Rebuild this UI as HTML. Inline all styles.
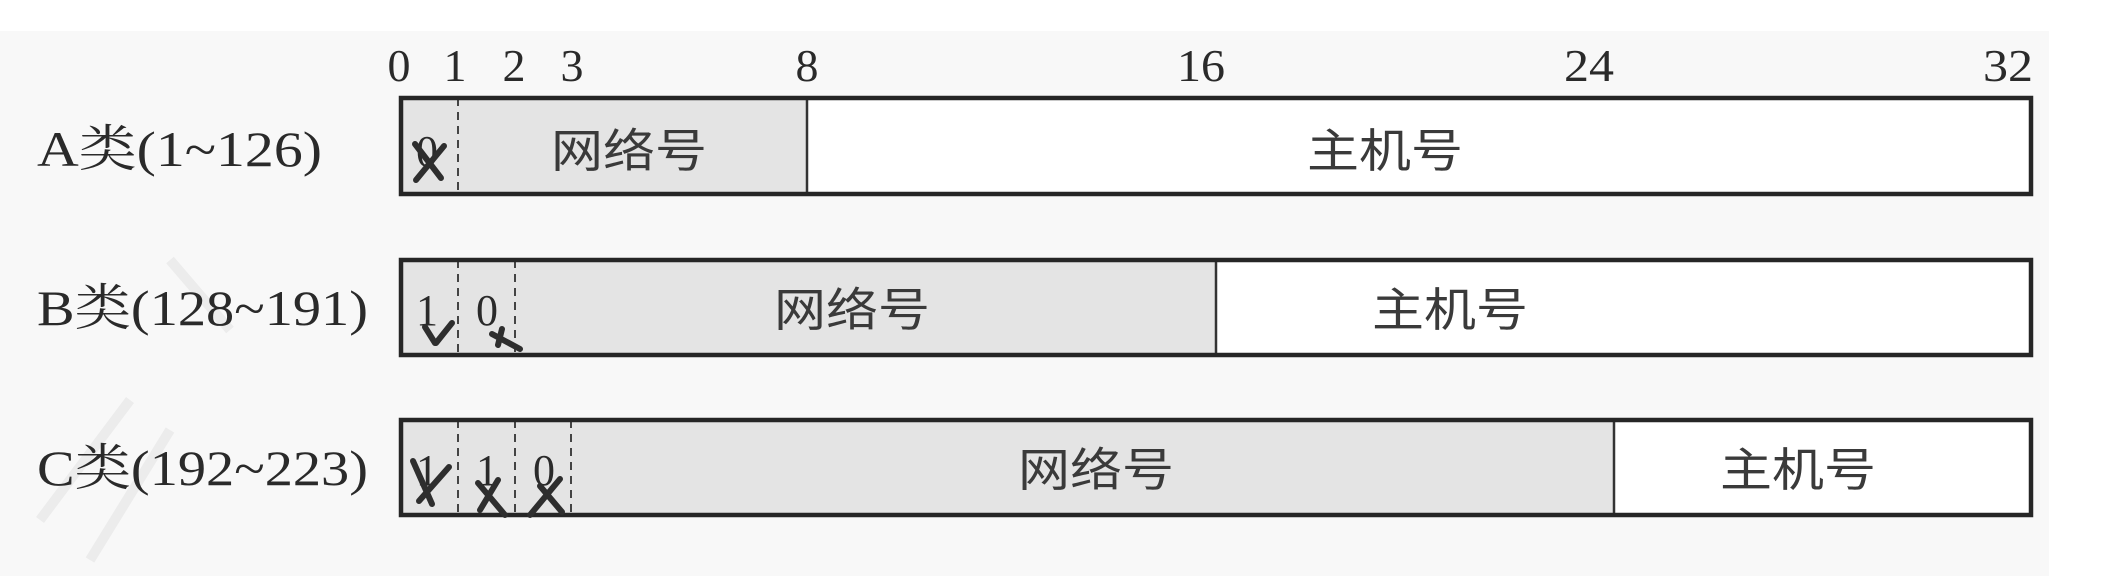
<!DOCTYPE html>
<html><head><meta charset="utf-8"><style>
html,body{margin:0;padding:0;background:#fff;}
svg{display:block;}
text{font-family:"Liberation Serif","Noto Serif CJK SC",serif;fill:#2a2a2a;}
.cn{font-family:"Liberation Sans","Noto Sans CJK SC",sans-serif;fill:#3a3a3a;}
</style></head><body>
<svg width="2122" height="576" viewBox="0 0 2122 576" xmlns="http://www.w3.org/2000/svg">
<rect x="0" y="31" width="2049" height="545" fill="#f8f8f8"/>
<!-- watermark hints -->
<g stroke="#ececec" stroke-width="10" fill="none">
<path d="M40 520 L130 400 M90 560 L170 430 M170 260 L230 330"/>
</g>
<!-- top numbers -->
<g font-size="46">
<text x="399" y="81" text-anchor="middle">0</text>
<text x="455" y="81" text-anchor="middle">1</text>
<text x="514" y="81" text-anchor="middle">2</text>
<text x="572" y="81" text-anchor="middle">3</text>
<text x="807" y="81" text-anchor="middle">8</text>
<text x="1201" y="81" text-anchor="middle" textLength="48" lengthAdjust="spacingAndGlyphs">16</text>
<text x="1589" y="81" text-anchor="middle" textLength="50" lengthAdjust="spacingAndGlyphs">24</text>
<text x="2008" y="81" text-anchor="middle" textLength="50" lengthAdjust="spacingAndGlyphs">32</text>
</g>
<!-- row labels -->
<g font-size="50">
<text x="37" y="166" textLength="285" lengthAdjust="spacingAndGlyphs">A类(1~126)</text>
<text x="37" y="325" textLength="331" lengthAdjust="spacingAndGlyphs">B类(128~191)</text>
<text x="37" y="485" textLength="331" lengthAdjust="spacingAndGlyphs">C类(192~223)</text>
</g>
<!-- Row A -->
<rect x="401" y="98" width="406" height="96" fill="#e4e4e4"/>
<rect x="807" y="98" width="1224" height="96" fill="#fff"/>
<line x1="807" y1="98" x2="807" y2="194" stroke="#333" stroke-width="2.5"/>
<line x1="458" y1="98" x2="458" y2="194" stroke="#444" stroke-width="2" stroke-dasharray="8,6"/>
<rect x="401" y="98" width="1630" height="96" fill="none" stroke="#262626" stroke-width="4.5"/>
<!-- Row B -->
<rect x="401" y="260" width="815" height="95" fill="#e4e4e4"/>
<rect x="1216" y="260" width="815" height="95" fill="#fff"/>
<line x1="1216" y1="260" x2="1216" y2="355" stroke="#333" stroke-width="2.5"/>
<line x1="458" y1="260" x2="458" y2="355" stroke="#444" stroke-width="2" stroke-dasharray="8,6"/>
<line x1="515" y1="260" x2="515" y2="355" stroke="#444" stroke-width="2" stroke-dasharray="8,6"/>
<rect x="401" y="260" width="1630" height="95" fill="none" stroke="#262626" stroke-width="4.5"/>
<!-- Row C -->
<rect x="401" y="420" width="1213" height="95" fill="#e4e4e4"/>
<rect x="1614" y="420" width="417" height="95" fill="#fff"/>
<line x1="1614" y1="420" x2="1614" y2="515" stroke="#333" stroke-width="2.5"/>
<line x1="458" y1="420" x2="458" y2="515" stroke="#444" stroke-width="2" stroke-dasharray="8,6"/>
<line x1="515" y1="420" x2="515" y2="515" stroke="#444" stroke-width="2" stroke-dasharray="8,6"/>
<line x1="571" y1="420" x2="571" y2="515" stroke="#444" stroke-width="2" stroke-dasharray="8,6"/>
<rect x="401" y="420" width="1630" height="95" fill="none" stroke="#262626" stroke-width="4.5"/>
<!-- field labels -->
<g class="cn" font-size="46">
<text class="cn" x="629" y="167" text-anchor="middle" textLength="156" lengthAdjust="spacingAndGlyphs">网络号</text>
<text class="cn" x="1385" y="167" text-anchor="middle" textLength="156" lengthAdjust="spacingAndGlyphs">主机号</text>
<text class="cn" x="852" y="326" text-anchor="middle" textLength="156" lengthAdjust="spacingAndGlyphs">网络号</text>
<text class="cn" x="1450" y="326" text-anchor="middle" textLength="156" lengthAdjust="spacingAndGlyphs">主机号</text>
<text class="cn" x="1096" y="486" text-anchor="middle" textLength="156" lengthAdjust="spacingAndGlyphs">网络号</text>
<text class="cn" x="1798" y="486" text-anchor="middle" textLength="156" lengthAdjust="spacingAndGlyphs">主机号</text>
</g>
<!-- bit digits -->
<g font-size="44">
<text x="427" y="166" text-anchor="middle">0</text>
<text x="427" y="325" text-anchor="middle">1</text>
<text x="487" y="325" text-anchor="middle">0</text>
<text x="427" y="485" text-anchor="middle">1</text>
<text x="487" y="485" text-anchor="middle">1</text>
<text x="544" y="485" text-anchor="middle">0</text>
</g>
<!-- hand marks -->
<g stroke="#2e2e2e" stroke-width="6" stroke-linecap="round" fill="none">
<path d="M415 144 L441 178 M444 146 L416 180"/>
<path d="M425 327 L435 343 M452 323 L436 343"/>
<path d="M492 334 L520 349 M502 329 L498 345"/>
<path d="M413 461 L432 504 M449 467 L419 501"/>
<path d="M478 483 L505 515 M498 480 L480 510"/>
<path d="M540 486 L562 512 M560 479 L530 515"/>
</g>
</svg>
</body></html>
